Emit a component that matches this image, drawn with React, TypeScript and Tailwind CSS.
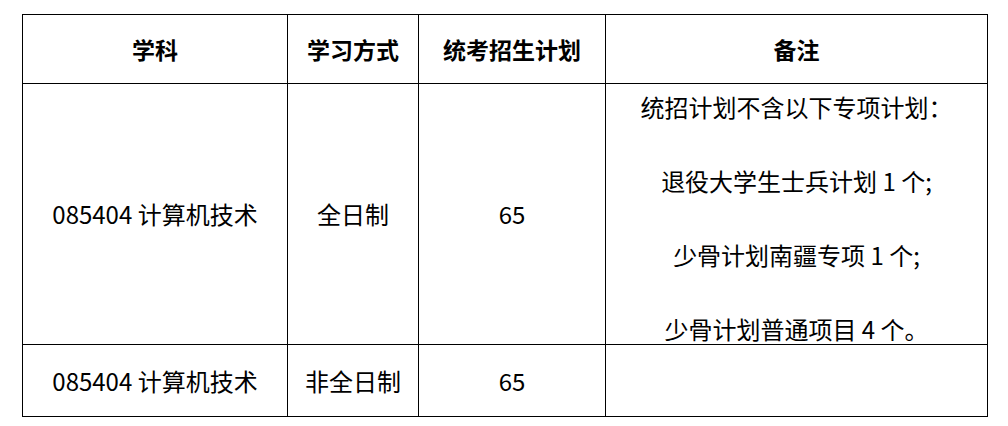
const font = { fontFamily: '"Noto Sans CJK SC", "Noto Sans", sans-serif' };

const remarks = [
  '统招计划不含以下专项计划：',
  '退役大学生士兵计划 1 个;',
  '少骨计划南疆专项 1 个;',
  '少骨计划普通项目 4 个。',
];

export default function App() {
  return (
    <div className="w-[1008px] h-[426px] bg-white pt-[14px] pl-[22px] text-black" style={font}>
      <table className="table-fixed border-collapse text-[24px] leading-none">
        <colgroup>
          <col className="w-[265px]" />
          <col className="w-[131px]" />
          <col className="w-[187px]" />
          <col className="w-[382px]" />
        </colgroup>
        <thead>
          <tr className="h-[69px] font-bold text-[23px]">
            <th className="border border-black text-center">学科</th>
            <th className="border border-black text-center">学习方式</th>
            <th className="border border-black text-center">统考招生计划</th>
            <th className="border border-black text-center">备注</th>
          </tr>
        </thead>
        <tbody>
          <tr className="h-[261px]">
            <td className="border border-black text-center">085404 计算机技术</td>
            <td className="border border-black text-center">全日制</td>
            <td className="border border-black text-center">65</td>
            <td className="border border-black p-0 align-top">
              <div className="flex h-[259px] flex-col gap-[36px] pt-[4px]">
                {remarks.map((r) => (
                  <div key={r} className="h-[38px] shrink-0 leading-[38px] text-center whitespace-pre">
                    {r}
                  </div>
                ))}
              </div>
            </td>
          </tr>
          <tr className="h-[72px]">
            <td className="border border-black text-center">085404 计算机技术</td>
            <td className="border border-black text-center">非全日制</td>
            <td className="border border-black text-center">65</td>
            <td className="border border-black"></td>
          </tr>
        </tbody>
      </table>
    </div>
  );
}
